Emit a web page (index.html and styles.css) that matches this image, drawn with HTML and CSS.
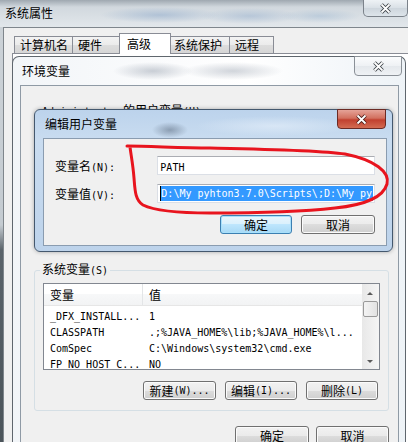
FILE: index.html
```html
<!DOCTYPE html>
<html lang="zh-CN">
<head>
    <meta charset="UTF-8">
    <link rel="stylesheet" href="styles.css">
</head>
<body>
    <div class="sys">
        <div class="sys-title">
            <span class="title-text">系统属性</span>
            <div class="close sys-close">
                <svg width="13" height="11" viewBox="0 0 13 11"><path d="M2.5 1.5 L10.5 9.5 M10.5 1.5 L2.5 9.5" stroke="#3b4046" stroke-width="3.6"/><path d="M2.5 1.5 L10.5 9.5 M10.5 1.5 L2.5 9.5" stroke="#fff" stroke-width="1.8"/></svg>
            </div>
        </div>
        <div class="sys-body">
            <div class="tabs">
                <div class="tab t1">计算机名</div>
                <div class="tab t2">硬件</div>
                <div class="tab t3 active">高级</div>
                <div class="tab t4">系统保护</div>
                <div class="tab t5">远程</div>
            </div>
            <div class="tab-page">
                <div class="win env">
                    <div class="win-title env-title">
                        <span class="title-text">环境变量</span>
                        <div class="close env-close">
                            <svg width="13" height="11" viewBox="0 0 13 11"><path d="M2.5 1.5 L10.5 9.5 M10.5 1.5 L2.5 9.5" stroke="#3b4046" stroke-width="3.6"/><path d="M2.5 1.5 L10.5 9.5 M10.5 1.5 L2.5 9.5" stroke="#fff" stroke-width="1.8"/></svg>
                        </div>
                    </div>
                    <div class="env-client">
                        <div class="user-group">
                            <div class="user-label"><span class="hw">Administrator</span> 的用户变量<span class="hw">(U)</span></div>
                        </div>

                        <div class="win edit">
                            <div class="win-title edit-title">
                                <span class="title-text">编辑用户变量</span>
                                <div class="close red-close">
                                    <svg width="13" height="11" viewBox="0 0 13 11"><path d="M2.5 1.5 L10.5 9.5 M10.5 1.5 L2.5 9.5" stroke="#4a1c18" stroke-width="3.6"/><path d="M2.5 1.5 L10.5 9.5 M10.5 1.5 L2.5 9.5" stroke="#fff" stroke-width="1.8"/></svg>
                                </div>
                            </div>
                            <div class="edit-client">
                                <div class="field-row">
                                    <span class="field-label">变量名<span class="hw">(N):</span></span>
                                    <div class="textbox"><span class="hw">PATH</span></div>
                                </div>
                                <div class="field-row second">
                                    <span class="field-label">变量值<span class="hw">(V):</span></span>
                                    <div class="textbox selected"><span class="hw">D:\My pyhton3.7.0\Scripts\;D:\My py</span></div>
                                </div>
                                <div class="btn-row edit-buttons">
                                    <div class="btn default w72">确定</div>
                                    <div class="btn w74">取消</div>
                                </div>
                            </div>
                        </div>

                        <fieldset class="group">
                            <legend>系统变量<span class="hw">(S)</span></legend>
                            <div class="list">
                                <div class="list-cols">
                                    <div class="list-head">
                                        <div class="col-name">变量</div>
                                        <div class="col-value">值</div>
                                    </div>
                                    <div class="list-rows">
                                        <div class="list-row"><span class="col-name hw">_DFX_INSTALL...</span><span class="col-value hw">1</span></div>
                                        <div class="list-row"><span class="col-name hw">CLASSPATH</span><span class="col-value hw">.;%JAVA_HOME%\lib;%JAVA_HOME%\l...</span></div>
                                        <div class="list-row"><span class="col-name hw">ComSpec</span><span class="col-value hw">C:\Windows\system32\cmd.exe</span></div>
                                        <div class="list-row"><span class="col-name hw">FP_NO_HOST_C...</span><span class="col-value hw">NO</span></div>
                                    </div>
                                </div>
                                <div class="scrollbar">
                                    <div class="arrow up"></div>
                                    <div class="thumb"></div>
                                    <div class="track"></div>
                                    <div class="arrow down"></div>
                                </div>
                            </div>
                            <div class="btn-row group-buttons">
                                <div class="btn w73">新建<span class="hw">(W)...</span></div>
                                <div class="btn w72">编辑<span class="hw">(I)...</span></div>
                                <div class="btn w72">删除<span class="hw">(L)</span></div>
                            </div>
                        </fieldset>

                        <div class="btn-row dialog-buttons">
                            <div class="btn w74">确定</div>
                            <div class="btn w73">取消</div>
                        </div>
                    </div>
                </div>
            </div>
        </div>
    </div>

    <svg class="mark" width="408" height="442" viewBox="0 0 408 442">
        <path d="M127 146 C150 146 180 148 210 148 C260 149 320 150 345 154 C375 160 390 172 387 184 C383 198 365 205 335 208 C300 212 250 213 210 213 C180 213 155 211 143 205 C135 200 135 190 134 178 C133 165 131 155 130 147" fill="none" stroke="#e8141e" stroke-width="3" stroke-linecap="round"/>
    </svg>
</body>
</html>
```

FILE: styles.css
```css
* {
    box-sizing: border-box;
}
body {
    margin: 0;
    width: 408px;
    height: 442px;
    overflow: hidden;
    position: relative;
    background: #4b545a;
    font-family: "Noto Sans CJK SC", sans-serif;
    font-size: 12px;
    color: #000;
}
.hw {
    font-family: "DejaVu Sans Mono", monospace;
    font-size: 10px;
}
.title-text {
    line-height: 14px;
    white-space: nowrap;
}

/* outer window */
.sys {
    width: 408px;
    height: 442px;
    background: linear-gradient(#cdd3d8, #c4cbd1 225px, #5a636a 250px, #4b545a);
}
.sys-title {
    height: 27px;
    display: flex;
    align-items: flex-start;
    background:
        radial-gradient(ellipse 60px 8px at 160px 15px, rgba(150, 175, 205, 0.6), transparent),
        radial-gradient(ellipse 50px 8px at 250px 16px, rgba(150, 175, 205, 0.5), transparent),
        radial-gradient(ellipse 40px 7px at 320px 16px, rgba(160, 185, 210, 0.5), transparent),
        linear-gradient(#9fa8b0, #d1d8de 7px, #e2e7eb);
}
.sys-title .title-text {
    padding: 6px 0 0 5px;
}
.close {
    display: flex;
    align-items: center;
    justify-content: center;
}
.sys-close {
    width: 45px;
    height: 17px;
    margin-left: auto;
    border: 1px solid #7b828a;
    border-top: 0;
    border-radius: 0 0 5px 5px;
    background: linear-gradient(#eef2f5, #d9e0e6 50%, #cdd5dc 50%, #dde4ea);
}
.sys-body {
    margin-left: 3px;
    height: 415px;
    border-top: 1px solid #7f868c;
    border-left: 1px solid #7f868c;
    background: #f0f0f0;
}

/* tabs */
.tabs {
    height: 25px;
    display: flex;
    align-items: flex-end;
    padding: 5px 0 0 10px;
}
.tab {
    height: 17px;
    margin-right: -1px;
    padding-left: 5px;
    border: 1px solid #898c95;
    border-bottom: 0;
    line-height: 15px;
    white-space: nowrap;
    background: linear-gradient(#f3f3f3, #ebebeb 50%, #dddddd 50%, #d6d6d6);
}
.tab.active {
    position: relative;
    z-index: 1;
    height: 21px;
    margin-bottom: -1px;
    padding-top: 1px;
    padding-left: 7px;
    line-height: 17px;
    background: #fff;
}
.t1 { width: 59px; }
.t2 { width: 48px; }
.t3 { width: 52px; }
.t4 { width: 60px; padding-left: 3px; }
.t5 { width: 45px; }
.tab-page {
    margin-left: 8px;
    height: 389px;
    padding-top: 1px;
    border-top: 1px solid #898c95;
    border-left: 1px solid #898c95;
    background: #fff;
}

/* glass windows */
.win {
    border: 1px solid #5f666d;
}
.env {
    width: 394px;
    height: 400px;
    margin: 1px 0 0 -1px;
    padding: 0 6px 0 7px;
    border-bottom: 0;
    border-radius: 7px 7px 0 0;
    background:
        radial-gradient(ellipse 40px 9px at 140px 14px, rgba(140, 150, 165, 0.45), transparent),
        radial-gradient(ellipse 50px 9px at 220px 14px, rgba(140, 150, 165, 0.4), transparent),
        linear-gradient(90deg, #f2f5f8, #ffffff 60%, #eef3f7);
}
.win-title {
    height: 28px;
    display: flex;
    align-items: flex-start;
}
.env-title .title-text {
    padding: 7px 0 0 2px;
}
.env-close {
    width: 48px;
    height: 20px;
    margin: -1px -3px 0 auto;
    border: 1px solid #8a9097;
    border-radius: 0 0 4px 4px;
    background: linear-gradient(#fbfcfd, #eef1f4 50%, #e4e8ec 50%, #eff2f5);
}
.env-client {
    position: relative;
    height: 372px;
    border: 1px solid #8f9aa5;
    background: #f0f0f0;
}
.user-group {
    height: 176px;
}
.user-label {
    padding: 17px 0 0 21px;
    line-height: 14px;
}

/* edit dialog */
.edit {
    position: absolute;
    left: 13px;
    top: 23px;
    width: 359px;
    height: 143px;
    padding: 0 5px 5px 8px;
    border-color: #44586e;
    border-radius: 6px;
    box-shadow: 0 0 4px rgba(0, 0, 0, 0.3);
    background:
        radial-gradient(ellipse 18px 8px at 135px 20px, rgba(70, 85, 105, 0.45), transparent),
        radial-gradient(ellipse 80px 10px at 240px 16px, rgba(230, 240, 250, 0.6), transparent),
        linear-gradient(#bcd3ec, #c9dcf0 30px, #bdd3eb);
}
.edit-title .title-text {
    padding: 7px 0 0 2px;
}
.red-close {
    width: 49px;
    height: 20px;
    margin: -1px 1px 0 auto;
    border: 1px solid #6b2a24;
    border-radius: 0 0 4px 4px;
    background: linear-gradient(#e5a398, #d2705f 45%, #c1402f 55%, #d36b52);
}
.edit-client {
    height: 108px;
    padding: 17px 11px 0 11px;
    border: 1px solid #8a9cb0;
    background: #f0f0f0;
}
.field-row {
    display: flex;
    align-items: center;
}
.field-row.second {
    margin-top: 9px;
}
.field-label {
    width: 103px;
    white-space: nowrap;
}
.textbox {
    width: 219px;
    height: 19px;
    padding: 1px 1px 0 2px;
    border: 1px solid #dbdfe6;
    border-top-color: #abadb3;
    background: #fff;
    overflow: hidden;
    white-space: nowrap;
    line-height: 15px;
}
.textbox.selected .hw {
    display: block;
    background: #3399ff;
    color: #fff;
    border-left: 1px solid #000;
}
.btn-row {
    display: flex;
    justify-content: flex-end;
}
.edit-buttons {
    margin-top: 12px;
    gap: 9px;
}
.btn {
    height: 19px;
    display: flex;
    align-items: center;
    justify-content: center;
    border: 1px solid #707070;
    border-radius: 3px;
    box-shadow: inset 0 0 0 1px #fbfbfb;
    background: linear-gradient(#f2f2f2, #ebebeb 50%, #dddddd 50%, #cfcfcf);
    white-space: nowrap;
}
.btn.default {
    border-color: #3c7fb1;
    box-shadow: inset 0 0 0 1px #a8e0fb;
    background: linear-gradient(#eaf6fd, #d9f0fc 50%, #bee6fd 50%, #a7d9f5);
}
.w72 { width: 72px; }
.w73 { width: 73px; }
.w74 { width: 74px; }

/* system variables */
.group {
    width: 355px;
    margin: 0 0 0 13px;
    padding: 5px 8px 10px 8px;
    border: 1px solid #d5dfe5;
    border-radius: 3px;
    min-width: 0;
}
.group legend {
    margin-left: -3px;
    padding: 0 2px;
    line-height: 14px;
}
.list {
    height: 87px;
    display: flex;
    border: 1px solid #828790;
    background: #fff;
}
.list-cols {
    flex: 1;
    overflow: hidden;
}
.list-head {
    height: 22px;
    display: flex;
    align-items: center;
    border-bottom: 1px solid #e6e6e6;
    background: linear-gradient(#ffffff, #ffffff 50%, #f7f8f9 50%, #f2f3f4);
}
.list-head .col-name {
    width: 99px;
    height: 100%;
    padding-left: 6px;
    line-height: 22px;
    border-right: 1px solid #e3e5e7;
}
.list-head .col-value {
    padding-left: 6px;
}
.list-rows {
    padding-top: 2px;
}
.list-row {
    height: 16px;
    display: flex;
    align-items: center;
    white-space: nowrap;
}
.list-row .col-name {
    width: 99px;
    padding-left: 6px;
}
.list-row .col-value {
    padding-left: 6px;
}
.scrollbar {
    width: 17px;
    display: flex;
    flex-direction: column;
    background: linear-gradient(90deg, #e8e8e8, #f5f5f5);
}
.arrow {
    height: 17px;
    position: relative;
}
.arrow::after {
    content: "";
    position: absolute;
    left: 5px;
    top: 7px;
    border: 3px solid transparent;
}
.arrow.up::after {
    top: 5px;
    border-bottom: 3px solid #5a5a5a;
}
.arrow.down::after {
    top: 8px;
    border-top: 3px solid #5a5a5a;
}
.thumb {
    height: 16px;
    margin: 0 1px;
    border: 1px solid #999;
    border-radius: 2px;
    background: linear-gradient(90deg, #f3f3f3, #e2e2e2);
}
.track {
    flex: 1;
}
.group-buttons {
    margin: 11px 2px 0 0;
    gap: 9px;
}
.dialog-buttons {
    width: 355px;
    margin: 15px 0 0 13px;
    gap: 7px;
}

/* red annotation drawn over the screenshot */
.mark {
    position: absolute;
    left: 0;
    top: 0;
    pointer-events: none;
}
```
